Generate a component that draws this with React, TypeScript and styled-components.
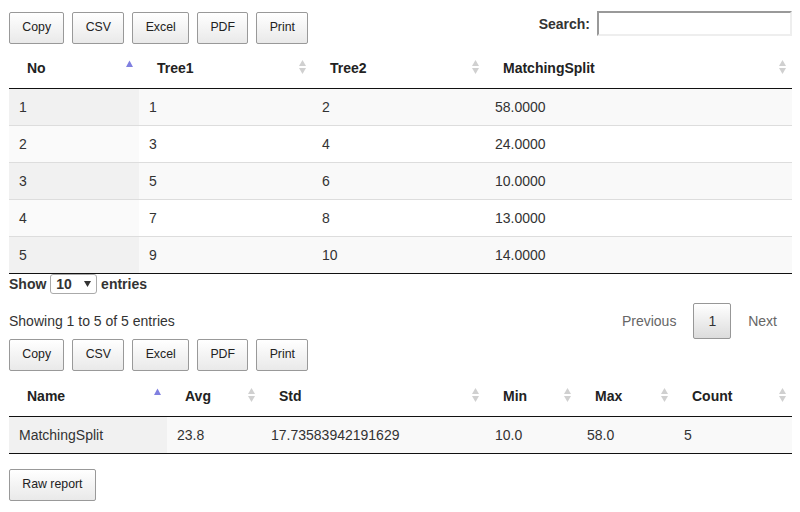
import React from "react";
import styled, { createGlobalStyle, css } from "styled-components";

const GlobalStyle = createGlobalStyle`
  html, body {
    margin: 0;
    padding: 0;
    background: #ffffff;
  }
  body {
    font-family: "Liberation Sans", Arial, sans-serif;
    font-size: 14px;
    color: #333333;
  }
`;

const Page = styled.div`
  box-sizing: border-box;
  width: 800px;
  padding: 0 8px 0 9px;
`;

const TopBar = styled.div`
  display: flex;
  justify-content: space-between;
  align-items: flex-start;
`;

const ButtonGroup = styled.div<{ $top: number }>`
  display: flex;
  gap: 8px;
  margin-top: ${(p) => p.$top}px;
`;

const DtButton = styled.button<{ $top?: number }>`
  box-sizing: border-box;
  display: inline-block;
  margin: ${(p) => p.$top ?? 0}px 0 0 0;
  padding: 6.16px 12.32px;
  font-family: "Liberation Sans", Arial, sans-serif;
  font-size: 12.32px;
  line-height: 17.8px;
  color: #222222;
  border: 1px solid #999999;
  border-radius: 2px;
  background: linear-gradient(to bottom, #ffffff 0%, #e9e9e9 100%);
  cursor: pointer;
  white-space: nowrap;
`;

const FilterLabel = styled.label`
  display: flex;
  align-items: center;
  margin-top: 11px;
  font-weight: bold;
  color: #333333;
`;

const SearchInput = styled.input`
  box-sizing: border-box;
  width: 195px;
  height: 25px;
  margin: 0 0 0 7px;
  padding: 2px 4px;
  border-style: solid;
  border-width: 2px;
  border-color: #999999 #eeeeee #eeeeee #999999;
  background: #ffffff;
  font-family: inherit;
  font-size: 13px;
  outline: none;
`;

const Table = styled.table<{ $top: number }>`
  width: 783px;
  margin-top: ${(p) => p.$top}px;
  table-layout: fixed;
  border-collapse: separate;
  border-spacing: 0;
  border-bottom: 1px solid #111111;
`;

const Th = styled.th`
  position: relative;
  text-align: left;
  font-weight: bold;
  padding: 10px 18px;
  line-height: 20px;
  color: #222222;
  border-bottom: 1px solid #111111;
  white-space: nowrap;
`;

const Td = styled.td<{ $odd: boolean; $sorted: boolean; $first: boolean }>`
  padding: 8px 10px;
  line-height: 20px;
  color: #333333;
  white-space: nowrap;
  ${(p) =>
    !p.$first &&
    css`
      border-top: 1px solid #dddddd;
    `}
  background: ${(p) =>
    p.$odd ? (p.$sorted ? "#f1f1f1" : "#f9f9f9") : p.$sorted ? "#fafafa" : "#ffffff"};
`;

const SortIcon = styled.svg`
  position: absolute;
  right: 6px;
  top: 12px;
  width: 7px;
  height: 14px;
`;

const LengthRow = styled.div`
  display: flex;
  align-items: center;
  height: 20px;
  font-weight: bold;
  color: #333333;
  white-space: pre;
`;

const SelectWrap = styled.span`
  position: relative;
  display: inline-block;
  height: 20px;
`;

const Select = styled.select`
  box-sizing: border-box;
  appearance: none;
  -webkit-appearance: none;
  width: 47px;
  height: 20px;
  margin: 0;
  padding: 0 0 0 5px;
  border: 1px solid #aaaaaa;
  border-radius: 3px;
  background: #ffffff;
  font-family: "Liberation Sans", Arial, sans-serif;
  font-size: 14px;
  font-weight: bold;
  color: #333333;
  outline: none;
`;

const SelectArrow = styled.svg`
  position: absolute;
  right: 6px;
  top: 7px;
  width: 7px;
  height: 6px;
  pointer-events: none;
`;

const InfoRow = styled.div`
  display: flex;
  justify-content: space-between;
  align-items: center;
  margin-top: 9px;
`;

const InfoText = styled.div`
  color: #333333;
  line-height: 20px;
`;

const Paging = styled.div`
  display: flex;
  align-items: center;
`;

const PageButton = styled.button<{ $current?: boolean }>`
  box-sizing: border-box;
  min-width: 21px;
  margin: 0 0 0 2px;
  padding: 7px 14px;
  font-family: "Liberation Sans", Arial, sans-serif;
  font-size: 14px;
  line-height: 20px;
  border-radius: 2px;
  cursor: default;
  ${(p) =>
    p.$current
      ? css`
          color: #333333;
          border: 1px solid #979797;
          background: linear-gradient(to bottom, #ffffff 0%, #dcdcdc 100%);
        `
      : css`
          color: #666666;
          border: 1px solid transparent;
          background: transparent;
        `}
`;

const SortAsc = () => (
  <SortIcon viewBox="0 0 7 14">
    <polygon points="3.5,0.5 7,7 0,7" fill="#8080e0" />
  </SortIcon>
);

const SortBoth = () => (
  <SortIcon viewBox="0 0 7 14">
    <polygon points="3.5,0 7,6 0,6" fill="#d0d0d0" />
    <polygon points="0,8 7,8 3.5,14" fill="#d0d0d0" />
  </SortIcon>
);

type Col = { title: string; width: number };

const DataTable: React.FC<{ cols: Col[]; rows: string[][]; top: number }> = ({
  cols,
  rows,
  top,
}) => (
  <Table $top={top}>
    <colgroup>
      {cols.map((c) => (
        <col key={c.title} style={{ width: c.width }} />
      ))}
    </colgroup>
    <thead>
      <tr>
        {cols.map((c, i) => (
          <Th key={c.title}>
            {c.title}
            {i === 0 ? <SortAsc /> : <SortBoth />}
          </Th>
        ))}
      </tr>
    </thead>
    <tbody>
      {rows.map((r, ri) => (
        <tr key={ri}>
          {r.map((v, ci) => (
            <Td key={ci} $odd={ri % 2 === 0} $sorted={ci === 0} $first={ri === 0}>
              {v}
            </Td>
          ))}
        </tr>
      ))}
    </tbody>
  </Table>
);

const Buttons: React.FC<{ top: number }> = ({ top }) => (
  <ButtonGroup $top={top}>
    {["Copy", "CSV", "Excel", "PDF", "Print"].map((b) => (
      <DtButton key={b}>{b}</DtButton>
    ))}
  </ButtonGroup>
);

const cols1: Col[] = [
  { title: "No", width: 130 },
  { title: "Tree1", width: 173 },
  { title: "Tree2", width: 173 },
  { title: "MatchingSplit", width: 307 },
];

const rows1 = [
  ["1", "1", "2", "58.0000"],
  ["2", "3", "4", "24.0000"],
  ["3", "5", "6", "10.0000"],
  ["4", "7", "8", "13.0000"],
  ["5", "9", "10", "14.0000"],
];

const cols2: Col[] = [
  { title: "Name", width: 158 },
  { title: "Avg", width: 94 },
  { title: "Std", width: 224 },
  { title: "Min", width: 92 },
  { title: "Max", width: 97 },
  { title: "Count", width: 118 },
];

const rows2 = [["MatchingSplit", "23.8", "17.73583942191629", "10.0", "58.0", "5"]];

export default function App() {
  return (
    <>
      <GlobalStyle />
      <Page>
        <TopBar>
          <Buttons top={12} />
          <FilterLabel>
            Search:
            <SearchInput type="search" />
          </FilterLabel>
        </TopBar>
        <DataTable cols={cols1} rows={rows1} top={4} />
        <LengthRow>
          {"Show "}
          <SelectWrap>
            <Select defaultValue="10">
              <option value="10">10</option>
              <option value="25">25</option>
              <option value="50">50</option>
              <option value="100">100</option>
            </Select>
            <SelectArrow viewBox="0 0 7 6">
              <polygon points="0,0 7,0 3.5,6" fill="#333333" />
            </SelectArrow>
          </SelectWrap>
          {" entries"}
        </LengthRow>
        <InfoRow>
          <InfoText>Showing 1 to 5 of 5 entries</InfoText>
          <Paging>
            <PageButton>Previous</PageButton>
            <PageButton $current>1</PageButton>
            <PageButton>Next</PageButton>
          </Paging>
        </InfoRow>
        <Buttons top={0} />
        <DataTable cols={cols2} rows={rows2} top={5} />
        <DtButton $top={15}>Raw report</DtButton>
      </Page>
    </>
  );
}
